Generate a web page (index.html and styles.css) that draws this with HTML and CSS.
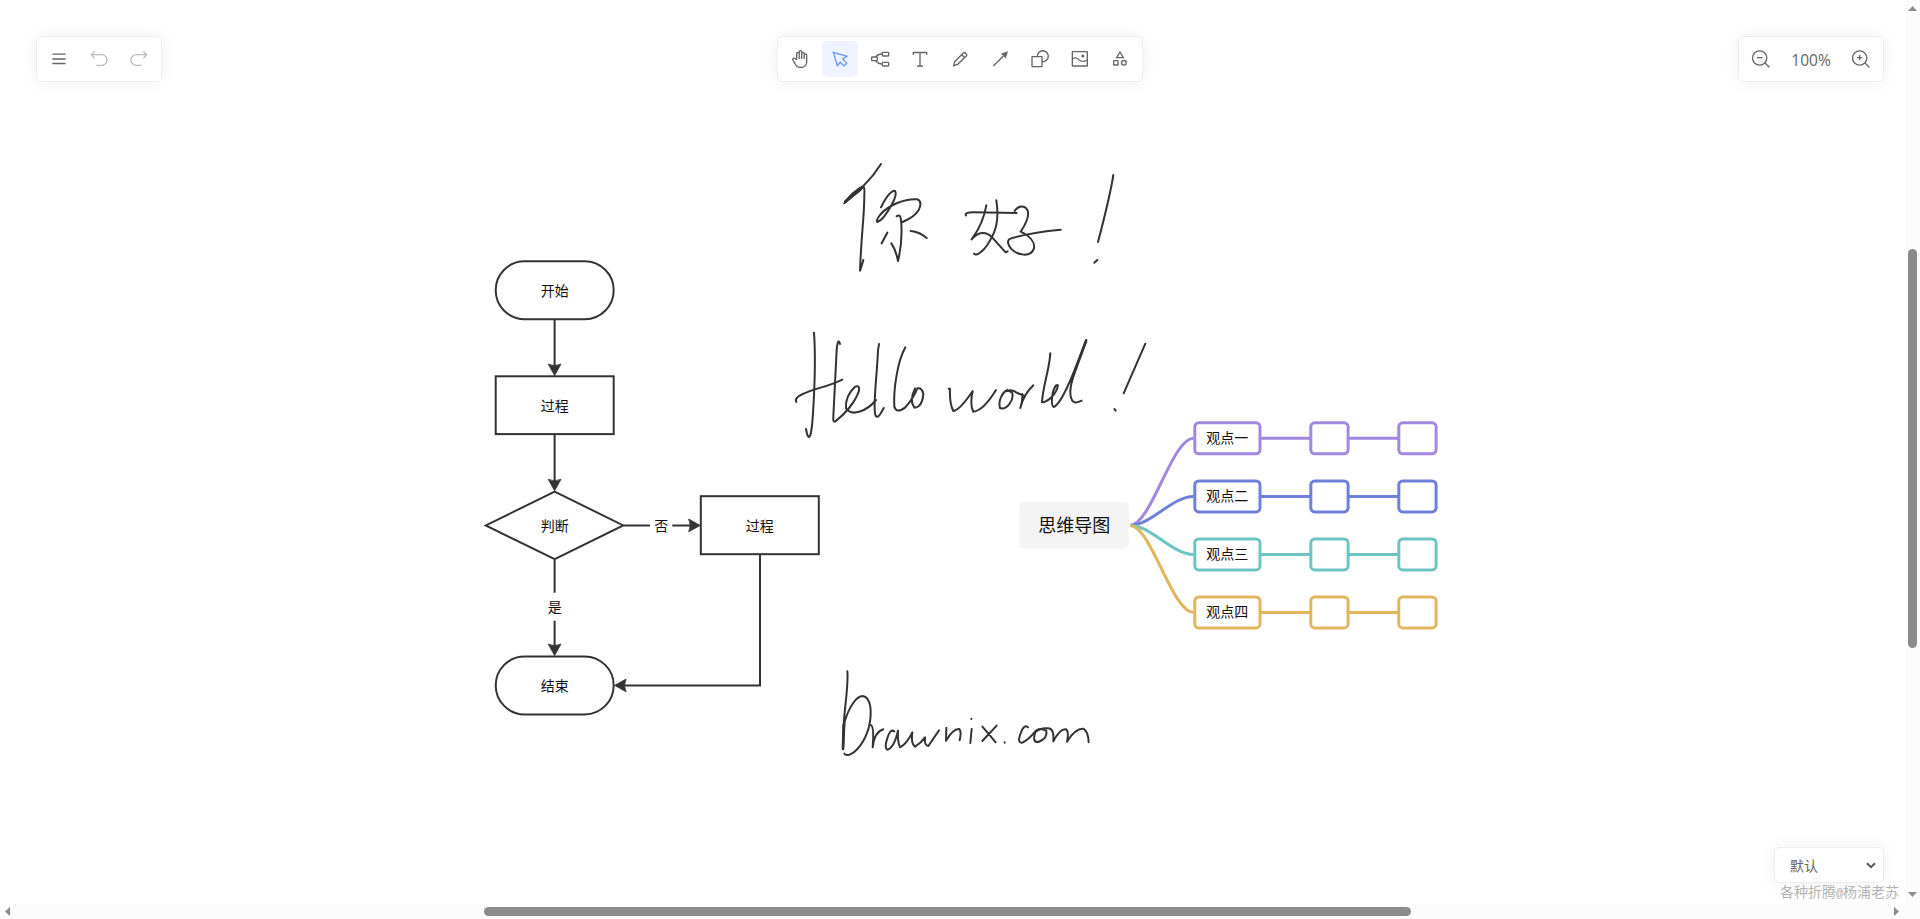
FILE: index.html
```html
<!DOCTYPE html>
<html lang="zh-CN">
<head>
  <meta charset="UTF-8" />
  <title>Drawnix</title>
  <meta name="viewport" content="width=device-width, initial-scale=1" />
  <link rel="stylesheet" href="styles.css">
</head>
<body>
  <div class="drawnix">
    <svg class="board" viewBox="0 0 1905 904" role="img" aria-label="Board">
      <defs>
        <path id="head" d="M0 0L-6.4 -11.5Q0 -8.5 6.4 -11.5Z" />
      </defs>

      <!-- flowchart -->
      <g class="shape">
        <rect x="495.7" y="261.2" width="118" height="58" rx="29" />
        <rect x="495.7" y="376.3" width="118" height="57.800" />
        <path d="M554.7 491.6L623.2 525.4L554.7 559.2L485.8 525.4Z" />
        <rect x="700.8" y="496.2" width="118" height="58" />
        <rect x="495.7" y="656.4" width="118" height="58" rx="29" />
        <path d="M554.6 320V366M554.6 435V481M554.6 560V592.7M554.6 620.7V646M623.5 525.4H650M672.3 525.4H690M760 555V685.4H624" />
      </g>
      <g class="heads">
        <use href="#head" transform="translate(554.6 375.6)" />
        <use href="#head" transform="translate(554.6 490.8)" />
        <use href="#head" transform="translate(554.6 655.6)" />
        <use href="#head" transform="translate(700.2 525.4) rotate(-90)" />
        <use href="#head" transform="translate(614.6 685.4) rotate(90)" />
      </g>
      <g class="label">
        <text x="554.7" y="296">开始</text>
        <text x="554.7" y="411">过程</text>
        <text x="554.7" y="531">判断</text>
        <text x="661.3" y="531">否</text>
        <text x="759.7" y="531">过程</text>
        <text x="554.7" y="612">是</text>
        <text x="554.7" y="691">结束</text>
      </g>

      <!-- mind map -->
      <rect class="root" x="1019.3" y="501.7" width="109.8" height="47" rx="5" />
      <g class="branch purple">
        <path d="M1130 525.4C1151 525.4 1172 438.3 1193.5 438.3M1261 438.3H1310M1349 438.3H1398" />
        <rect x="1194.8" y="422.8" width="65.2" height="31" rx="4" />
        <rect x="1310.8" y="422.8" width="37.3" height="31" rx="4" />
        <rect x="1398.8" y="422.8" width="37.3" height="31" rx="4" />
      </g>
      <g class="branch blue">
        <path d="M1130 525.4C1151 525.4 1172 496.4 1193.5 496.4M1261 496.4H1310M1349 496.4H1398" />
        <rect x="1194.8" y="480.9" width="65.2" height="31" rx="4" />
        <rect x="1310.8" y="480.9" width="37.3" height="31" rx="4" />
        <rect x="1398.8" y="480.9" width="37.3" height="31" rx="4" />
      </g>
      <g class="branch teal">
        <path d="M1130 525.4C1151 525.4 1172 554.4 1193.5 554.4M1261 554.4H1310M1349 554.4H1398" />
        <rect x="1194.8" y="538.9" width="65.2" height="31" rx="4" />
        <rect x="1310.8" y="538.9" width="37.3" height="31" rx="4" />
        <rect x="1398.8" y="538.9" width="37.3" height="31" rx="4" />
      </g>
      <g class="branch gold">
        <path d="M1130 525.4C1151 525.4 1172 612.4 1193.5 612.4M1261 612.4H1310M1349 612.4H1398" />
        <rect x="1194.8" y="596.9" width="65.2" height="31" rx="4" />
        <rect x="1310.8" y="596.9" width="37.3" height="31" rx="4" />
        <rect x="1398.8" y="596.9" width="37.3" height="31" rx="4" />
      </g>
      <g class="label">
        <text class="root-label" x="1074.2" y="532">思维导图</text>
        <text x="1227.3" y="443">观点一</text>
        <text x="1227.3" y="501">观点二</text>
        <text x="1227.3" y="559">观点三</text>
        <text x="1227.3" y="617">观点四</text>
      </g>

      <!-- freehand strokes -->
      <g class="pen" transform="translate(820 150) scale(.33333)">
        <path d="M183 42C168 66 148 90 131 107C104 122 86 140 73 160L131 110Q134 112 133 135C133 200 124 250 120 362Q124 352 130 330" />
        <path d="M76 154L122 118" class="thick" />
        <path d="M183 172Q207 122 225 122Q232 134 215 164Q190 210 172 216Q167 212 180 195C205 165 255 145 293 148Q308 156 296 180Q285 200 248 216M230 199Q241 190 243 210Q249 270 234 333Q228 300 214 280M202 248L185 280M272 243Q300 246 320 264" />
        <path d="M438 196Q432 187 460 187L590 189M499 166Q490 220 455 268C475 245 498 242 517 263L557 307L563 304M529 151Q540 220 515 262C495 303 470 320 462 311" />
        <path d="M584 183C595 165 615 166 622 180Q632 200 602 245C630 258 645 277 642 295C632 324 592 316 573 296Q552 268 580 263Q640 246 722 239M880 75Q871 135 834 276M823 338L832 330" />
      </g>
      <g class="pen" transform="translate(780 320) scale(.33333)">
        <path d="M102 38C108 120 104 200 99 280C94 360 85 368 78 327M49 246Q40 232 80 217C110 204 145 200 187 179M180 72Q174 50 170 90L160 290Q158 308 166 304C190 286 225 250 237 212Q240 194 225 200Q195 228 198 265C215 292 262 272 288 240" />
        <path d="M297 72Q296 80 294 90C292 150 282 230 284 268Q286 315 311 264M376 82C352 125 340 210 343 260Q350 282 376 262Q400 235 412 205Q426 202 430 222Q427 262 403 263Q387 242 405 205" />
        <path d="M506 206L510 206Q508 250 520 273Q540 270 578 213Q569 255 580 275Q610 272 648 210M682 210C665 218 654 245 660 264C680 272 702 240 697 220Q692 211 682 213Q696 206 712 219L730 226M727 222Q728 245 721 264Q730 225 760 196" />
        <path d="M811 100C808 150 788 200 786 247C805 246 830 220 834 196Q826 190 818 220Q812 255 821 261C850 250 895 120 919 60C905 100 872 170 871 215Q871 260 905 242M1096 71L1031 220M1003 267L1007 272" />
        <path d="M918 63L873 185" class="thick" />
      </g>
      <g class="pen" transform="translate(820 660) scale(.33333)">
        <path d="M82 34C86 80 72 150 71 200L69 268L74 185C88 138 110 108 128 108C155 112 156 160 147 200C135 245 110 276 88 284Q76 287 73 281" />
        <path d="M71 195L69 266" class="thick" />
        <path d="M152 195Q163 198 158 262Q163 216 190 208M223 214Q210 205 202 235Q192 262 202 269Q222 264 234 212Q232 245 240 262Q260 252 277 217Q272 250 285 260Q302 250 315 232Q312 256 325 258L357 211" />
        <path d="M379 203L378 242Q400 205 418 207Q425 215 419 241M455 207L451 249M454 176V177M487 200Q505 220 527 247M530 197L487 243M554 247V248" />
        <path d="M624 202Q612 190 600 225Q592 250 607 248Q625 240 648 212Q634 248 655 246Q684 234 679 212Q655 200 645 217Q660 203 685 205Q703 205 700 244Q720 205 738 208Q748 215 741 245Q765 205 790 206Q805 215 806 247" />
      </g>
    </svg>

    <div class="island menu-bar">
      <button class="tool" aria-label="Menu"><svg class="icon" viewBox="0 0 54 54"><path d="M7 12.5H47M7 27H47M7 40.5H47" /></svg></button>
      <button class="tool" aria-label="Undo" disabled><svg class="icon" viewBox="0 0 54 54"><path d="M14 4L4 14L14 25M4 14H35A16 16 0 0 1 35 46H19" /></svg></button>
      <button class="tool" aria-label="Redo" disabled><svg class="icon" viewBox="0 0 54 54"><path d="M40 4L50 14L40 25M50 14H19A16 16 0 0 0 19 46H35" /></svg></button>
    </div>

    <div class="island tool-bar">
      <button class="tool" aria-label="Hand"><svg class="icon hand" viewBox="0 0 24 24"><path d="M8 13V5.5a1.5 1.5 0 0 1 3 0V12M11 5.5v-2a1.5 1.5 0 1 1 3 0V12M14 5.5a1.5 1.5 0 0 1 3 0V12M17 7.5a1.5 1.5 0 0 1 3 0V16a6 6 0 0 1-6 6h-2a6 6 0 0 1-5-2.7C6.7 18.8 5.4 16.6 3.5 13.3a1.5 1.5 0 0 1 .5-2a1.9 1.9 0 0 1 2.3.3L8 13" /></svg></button>
      <button class="tool active" aria-label="Selection"><svg class="icon" viewBox="0 0 54 54"><path d="M7 7L48 19L35 27L47 40L39 48L28 37L19 47Z" /></svg></button>
      <button class="tool" aria-label="Mind"><svg class="icon" viewBox="0 0 54 54"><rect x="2" y="21" width="17" height="11" rx="2" /><rect x="34" y="7" width="19" height="11" rx="2" /><rect x="34" y="37" width="19" height="11" rx="2" /><path d="M14 21Q20 12 34 12M14 32Q20 42 34 42" /></svg></button>
      <button class="tool" aria-label="Text"><svg class="icon" viewBox="0 0 54 54"><path d="M7 15V7.5H47V15M27 7.5V48M18 48H36" /></svg></button>
      <button class="tool" aria-label="Pen"><svg class="icon" viewBox="0 0 54 54"><path d="M8 47L11 35L37 9Q40 6 43 9L46 12Q49 15 46 18L20 43ZM32 14L41 23" /></svg></button>
      <button class="tool" aria-label="Arrow"><svg class="icon" viewBox="0 0 54 54"><path d="M7 48L38 17" /><path class="tip" d="M51 4L44 26L38 17L29 11Z" /></svg></button>
      <button class="tool" aria-label="Shape"><svg class="icon" viewBox="0 0 54 54"><rect x="3" y="20" width="30" height="30" rx="1" /><path d="M19 20A16.5 16.5 0 1 1 33 35" /></svg></button>
      <button class="tool" aria-label="Image"><svg class="icon" viewBox="0 0 54 54"><rect x="4" y="5" width="45" height="43" rx="1" /><path d="M4 28C12 20 18 24 25 30Q35 38 49 30" /><circle class="tip" cx="35.5" cy="18" r="4.5" /></svg></button>
      <button class="tool" aria-label="More shapes"><svg class="icon" viewBox="0 0 54 54"><path d="M27 6L37 23H17Z" /><rect x="8" y="32" width="13" height="13" rx="1" /><circle cx="38.5" cy="38.5" r="7" /></svg></button>
    </div>

    <div class="island zoom-bar">
      <button class="tool" aria-label="Zoom out"><svg class="icon" viewBox="0 0 54 54"><circle cx="23" cy="24" r="21.5" /><path d="M39 39L52 52M15 23H31" /></svg></button>
      <div class="zoom-value">100%</div>
      <button class="tool" aria-label="Zoom in"><svg class="icon" viewBox="0 0 54 54"><circle cx="23" cy="24" r="21.5" /><path d="M39 39L52 52M15 23H31M23 15V31" /></svg></button>
    </div>

    <div class="island theme-bar">
      <span>默认</span>
      <svg class="chevron" viewBox="0 0 10 7"><path d="M1 1.2L5 5.2L9 1.2" /></svg>
    </div>
    <div class="watermark">各种折腾<span class="at">@</span>杨浦老苏</div>
  </div>

  <div class="scroll-y">
    <svg viewBox="0 0 9 5" class="arrow-y"><path d="M4.5 0L9 5H0Z" /></svg>
    <div class="track"><div class="thumb"></div></div>
    <svg viewBox="0 0 9 5" class="arrow-y"><path d="M0 0H9L4.5 5Z" /></svg>
  </div>
  <div class="scroll-x">
    <svg viewBox="0 0 5 9" class="arrow-x"><path d="M5 0V9L0 4.5Z" /></svg>
    <div class="track"><div class="thumb"></div></div>
    <svg viewBox="0 0 5 9" class="arrow-x"><path d="M0 0L5 4.5L0 9Z" /></svg>
  </div>
</body>
</html>
```
FILE: styles.css
```css
*, *::before, *::after { box-sizing: border-box; }
body {
  display: grid;
  grid-template-columns: 1905px 15px;
  grid-template-rows: 904px 15px;
  width: 1920px;
  height: 919px;
  margin: 0;
  overflow: hidden;
  background: #fcfcfc;
  font-family: "Open Sans", "Noto Sans CJK SC", sans-serif;
  color: #666;
}
.drawnix {
  position: relative;
  background: #fff;
}
.board {
  display: block;
  width: 1905px;
  height: 904px;
}

/* board elements */
.shape {
  fill: none;
  stroke: #333;
  stroke-width: 2;
}
.heads {
  fill: #333;
  stroke: #333;
  stroke-width: .8;
  stroke-linejoin: round;
}
.label {
  fill: #111;
  font-family: "Noto Sans CJK SC", sans-serif;
  font-size: 14px;
  text-anchor: middle;
}
.root-label { font-size: 18px; }
.root { fill: #f4f4f4; }
.branch {
  fill: none;
  stroke-width: 3;
}
.purple { stroke: #a287e1; }
.blue { stroke: #6e80db; }
.teal { stroke: #6dc4c4; }
.gold { stroke: #e0b75e; }
.pen {
  fill: none;
  stroke: #333;
  stroke-width: 6;
  stroke-linecap: round;
  stroke-linejoin: round;
}
.thick { stroke-width: 8; }

/* floating toolbars */
.island {
  position: absolute;
  display: flex;
  align-items: center;
  gap: 4px;
  padding: 4px;
  background: #fff;
  border: 1px solid #eee;
  border-radius: 6px;
  box-shadow: 0 0 16px rgba(0,0,0,0.07);
}
.menu-bar { left: 36px; top: 36px; }
.tool-bar { left: 777px; top: 36px; }
.zoom-bar { left: 1738px; top: 36px; }
.tool {
  display: flex;
  align-items: center;
  justify-content: center;
  width: 36px;
  height: 36px;
  padding: 0;
  border: none;
  border-radius: 5px;
  background: none;
  color: #666;
}
.tool.active {
  background: #eef3ff;
  color: #6698ff;
}
.tool:disabled { color: #bbb; }
.icon {
  width: 18px;
  height: 18px;
  fill: none;
  stroke: currentColor;
  stroke-width: 4;
  overflow: visible;
}
.hand {
  width: 20px;
  height: 20px;
  stroke-width: 1.6;
}
.tip {
  fill: currentColor;
  stroke: none;
}
.zoom-value {
  width: 56px;
  padding-top: 2px;
  text-align: center;
  font-size: 15.5px;
  line-height: 20px;
}
.theme-bar {
  left: 1774px;
  top: 847px;
  justify-content: space-between;
  width: 110px;
  height: 36px;
  padding: 0 7px 0 15px;
  font-size: 14px;
}
.chevron {
  width: 10px;
  height: 7px;
  fill: none;
  stroke: #555;
  stroke-width: 2;
}
.watermark {
  position: absolute;
  left: 1780px;
  top: 882px;
  font-size: 14px;
  line-height: 20px;
  white-space: nowrap;
  color: #b3b3b3;
}
.at {
  display: inline-block;
  width: 7px;
  font-family: "Liberation Mono", monospace;
  font-size: 12px;
}

/* scrollbars */
.scroll-y {
  display: flex;
  flex-direction: column;
  align-items: center;
  padding: 6px 0 7px;
}
.scroll-x {
  display: flex;
  align-items: center;
  padding: 0 6px 0 5px;
}
.track { flex: 1; }
.arrow-x, .arrow-y {
  display: block;
  fill: #8b8b8b;
}
.arrow-y { width: 9px; height: 5px; }
.arrow-x { width: 5px; height: 9px; }
.thumb {
  background: #8b8b8b;
  border-radius: 5px;
}
.scroll-y .thumb {
  width: 9px;
  height: 399px;
  margin-top: 238px;
}
.scroll-x .thumb {
  width: 927px;
  height: 9px;
  margin-left: 474px;
}
```
